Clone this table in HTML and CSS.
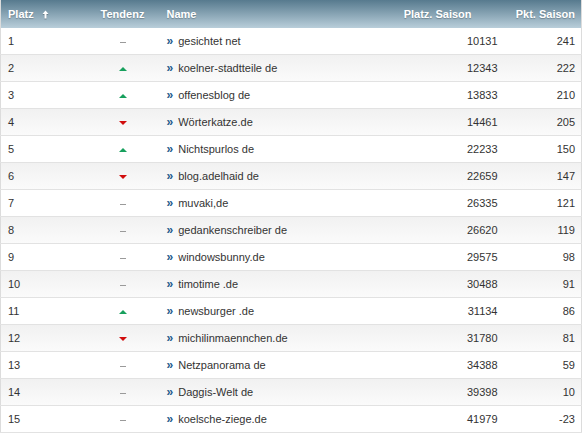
FILE: index.html
```html
<!DOCTYPE html>
<html lang="de">
<head>
<meta charset="utf-8">
<title>Rangliste</title>
<link rel="stylesheet" href="styles.css">
</head>
<body>
<table class="rank">
  <colgroup>
    <col class="c-platz"><col class="c-tend"><col class="c-name"><col class="c-ps"><col class="c-pkt">
  </colgroup>
  <thead>
    <tr>
      <th class="h-platz">Platz <svg class="sort" width="7" height="9" viewBox="0 0 7 9"><path d="M3.5 0.5 L6.5 4 H4.5 V8.5 H2.5 V4 H0.5 Z" fill="#fff"/></svg></th>
      <th class="h-tend">Tendenz</th>
      <th class="h-name">Name</th>
      <th class="h-ps">Platz. Saison</th>
      <th class="h-pkt">Pkt. Saison</th>
    </tr>
  </thead>
  <tbody>
    <tr><td class="platz">1</td><td class="tend"><span class="flat"></span></td><td class="name"><span class="chev">»</span>gesichtet net</td><td class="num ps">10131</td><td class="num pkt">241</td></tr>
    <tr><td class="platz">2</td><td class="tend"><span class="up"></span></td><td class="name"><span class="chev">»</span>koelner-stadtteile de</td><td class="num ps">12343</td><td class="num pkt">222</td></tr>
    <tr><td class="platz">3</td><td class="tend"><span class="up"></span></td><td class="name"><span class="chev">»</span>offenesblog de</td><td class="num ps">13833</td><td class="num pkt">210</td></tr>
    <tr><td class="platz">4</td><td class="tend"><span class="down"></span></td><td class="name"><span class="chev">»</span>Wörterkatze.de</td><td class="num ps">14461</td><td class="num pkt">205</td></tr>
    <tr><td class="platz">5</td><td class="tend"><span class="up"></span></td><td class="name"><span class="chev">»</span>Nichtspurlos de</td><td class="num ps">22233</td><td class="num pkt">150</td></tr>
    <tr><td class="platz">6</td><td class="tend"><span class="down"></span></td><td class="name"><span class="chev">»</span>blog.adelhaid de</td><td class="num ps">22659</td><td class="num pkt">147</td></tr>
    <tr><td class="platz">7</td><td class="tend"><span class="flat"></span></td><td class="name"><span class="chev">»</span>muvaki,de</td><td class="num ps">26335</td><td class="num pkt">121</td></tr>
    <tr><td class="platz">8</td><td class="tend"><span class="flat"></span></td><td class="name"><span class="chev">»</span>gedankenschreiber de</td><td class="num ps">26620</td><td class="num pkt">119</td></tr>
    <tr><td class="platz">9</td><td class="tend"><span class="flat"></span></td><td class="name"><span class="chev">»</span>windowsbunny.de</td><td class="num ps">29575</td><td class="num pkt">98</td></tr>
    <tr><td class="platz">10</td><td class="tend"><span class="flat"></span></td><td class="name"><span class="chev">»</span>timotime .de</td><td class="num ps">30488</td><td class="num pkt">91</td></tr>
    <tr><td class="platz">11</td><td class="tend"><span class="up"></span></td><td class="name"><span class="chev">»</span>newsburger .de</td><td class="num ps">31134</td><td class="num pkt">86</td></tr>
    <tr><td class="platz">12</td><td class="tend"><span class="down"></span></td><td class="name"><span class="chev">»</span>michilinmaennchen.de</td><td class="num ps">31780</td><td class="num pkt">81</td></tr>
    <tr><td class="platz">13</td><td class="tend"><span class="flat"></span></td><td class="name"><span class="chev">»</span>Netzpanorama de</td><td class="num ps">34388</td><td class="num pkt">59</td></tr>
    <tr><td class="platz">14</td><td class="tend"><span class="flat"></span></td><td class="name"><span class="chev">»</span>Daggis-Welt de</td><td class="num ps">39398</td><td class="num pkt">10</td></tr>
    <tr><td class="platz">15</td><td class="tend"><span class="flat"></span></td><td class="name"><span class="chev">»</span>koelsche-ziege.de</td><td class="num ps">41979</td><td class="num pkt">-23</td></tr>
  </tbody>
</table>
</body>
</html>
```

FILE: styles.css
```css
html, body {
  margin: 0;
  padding: 0;
  background: #fff;
}

.rank {
  width: 582px;
  border-collapse: collapse;
  table-layout: fixed;
  font-family: "Liberation Sans", Arial, sans-serif;
  font-size: 11px;
  color: #333;
  border-left: 1px solid #dcdcdc;
  border-right: 1px solid #dcdcdc;
}

.c-platz { width: 86px; }
.c-tend { width: 72px; }
.c-name { width: auto; }
.c-ps { width: 135px; }
.c-pkt { width: 46px; }

.rank thead tr {
  background: linear-gradient(#577a8e, #b9ceda);
}

.rank th {
  height: 28px;
  padding: 0;
  color: #fff;
  font-weight: bold;
  text-shadow: 0 1px 1px rgba(0, 0, 0, 0.25);
  white-space: nowrap;
  vertical-align: middle;
}

.h-platz { text-align: left; padding-left: 7px !important; }
.h-tend { text-align: center; }
.h-name { text-align: left; padding-left: 8px !important; }
.h-ps { text-align: right; padding-right: 64px !important; }
.h-pkt { text-align: right; padding-right: 6px !important; direction: rtl; overflow: visible; }

.sort {
  margin-left: 5px;
  vertical-align: -1px;
  filter: drop-shadow(0 1px 0 rgba(0,0,0,0.25));
}

.rank td {
  height: 26px;
  padding: 0;
  border-bottom: 1px solid #e2e2e2;
  vertical-align: middle;
  white-space: nowrap;
}

.rank tbody tr:nth-child(even) {
  background: linear-gradient(#f1f1f1, #fbfbfb);
}

.platz { padding-left: 7px !important; }
.tend { text-align: center; }
.name { padding-left: 8px !important; }
.num { text-align: right; }
.ps { padding-right: 38px !important; }
.pkt { padding-right: 6px !important; }

.chev {
  color: #1d5a8c;
  font-weight: bold;
  font-size: 12px;
  margin-right: 5px;
}

.flat {
  display: inline-block;
  width: 6px;
  height: 1px;
  background: #9a9a9a;
  vertical-align: middle;
}

.up, .down {
  display: inline-block;
  width: 0;
  height: 0;
  border-left: 4px solid transparent;
  border-right: 4px solid transparent;
  vertical-align: middle;
}

.up {
  border-bottom: 4px solid #17a05d;
}

.down {
  border-top: 4px solid #d10d0d;
}
```
